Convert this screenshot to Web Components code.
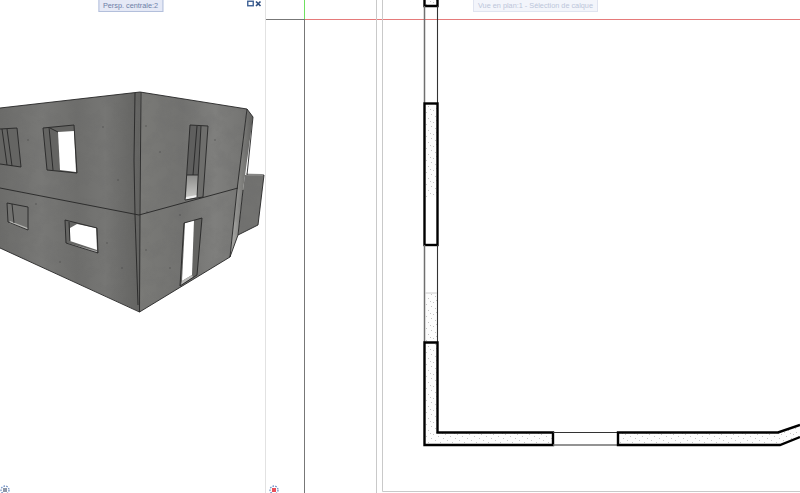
<!DOCTYPE html>
<html lang="fr">
<head>
<meta charset="utf-8">
<title>Vues</title>
<style>
    html, body{ margin: 0; height: 100%; background: #fff; overflow: hidden; }
    body{ font-family: "Liberation Sans", Arial, sans-serif; }
</style>
</head>
<body>
<cad-workspace>
    <cad-viewport slot="left" caption="Persp. centrale:2" shift="-2" pivot-left="0" controls pivot="#8f98a8"><house-view></house-view></cad-viewport>
    <cad-viewport slot="right" caption="Vue en plan:1 - Sélection de calque" shift="2.5" pivot-left="3" faded pivot="#e8505a"><plan-view></plan-view></cad-viewport>
</cad-workspace>

<script>
class CadWorkspace extends HTMLElement{

    connectedCallback(){
        this.attachShadow({mode: 'open'}).innerHTML = `
            <style>
                :host{ display: flex; width: 800px; height: 493px; }
                .left{ flex: 0 0 265px; display: flex; }
                .split{ flex: 0 0 1px; background: #e2e2e2; }
                .right{ flex: 1; display: flex; }
                ::slotted(*){ flex: 1; }
            </style>
            <div class="left"><slot name="left"></slot></div>
            <div class="split"></div>
            <div class="right"><slot name="right"></slot></div>`;
    }
}

class CadViewport extends HTMLElement{

    connectedCallback(){
        const buttons = this.hasAttribute('controls') ? `
            <svg class="buttons" width="15" height="8" viewBox="0 0 15 8">
                <rect x="0.75" y="1.25" width="5.5" height="4.5" fill="none" stroke="#3f6296" stroke-width="1.4"/>
                <path d="M9 1.5L13.5 6M13.5 1.5L9 6" stroke="#2f4f80" stroke-width="1.7"/>
            </svg>` : '';
        this.attachShadow({mode: 'open'}).innerHTML = `
            <style>
                :host{ display: block; position: relative; overflow: hidden; }
                .tab{
                    position: absolute; top: -1px; left: 50%;
                    transform: translateX(calc(-50% + ${this.getAttribute('shift') || 0}px));
                    padding: 0 4px; height: 11px; line-height: 11px;
                    font-size: 7.3px; white-space: nowrap;
                    color: #6d7fa6; background: #e5e9f6; border: 1px solid #b3bfdb;
                }
                :host([faded]) .tab{ color: #bcc5da; background: #f3f5fb; border-color: #e0e4f0; }
                .buttons{ position: absolute; top: 0; right: 3px; }
                .pivot{ position: absolute; left: ${this.getAttribute('pivot-left') || 0}px; bottom: -1px; }
            </style>
            <slot></slot>
            <div class="tab">${this.getAttribute('caption')}</div>
            ${buttons}
            <svg class="pivot" width="10" height="9" viewBox="0 0 10 9">
                <circle cx="5" cy="5" r="4" fill="none" stroke="#6f8fc4" stroke-width="1.3" stroke-dasharray="1.6 1.2"/>
                <rect x="3" y="3" width="4" height="4" fill="${this.getAttribute('pivot')}"/>
            </svg>`;
    }
}

class HouseView extends HTMLElement{

    connectedCallback(){
        const specks = [[103,127],[146,126],[118,180],[147,212],[107,243],[146,250],[160,152],[215,140],[28,140],[36,204],[180,215],[122,268],[60,262],[170,268]]
            .map(p => `<circle cx="${p[0]}" cy="${p[1]}" r="0.7" fill="#333" opacity="0.6"/>`).join('');

        this.attachShadow({mode: 'open'}).innerHTML = `
            <style>
                :host{ display: block; }
                svg{ display: block; filter: blur(0.3px); }
                .edge{ fill: none; stroke: #262626; stroke-width: 0.9; }
            </style>
            <svg width="265" height="493" viewBox="0 0 265 493">
                <defs>
                    <linearGradient id="wallLeft" x1="0" x2="1" y1="0" y2="0">
                        <stop offset="0" stop-color="#6c6c6a"/>
                        <stop offset="0.3" stop-color="#787876"/>
                        <stop offset="0.55" stop-color="#6e6e6c"/>
                        <stop offset="0.75" stop-color="#767674"/>
                        <stop offset="1" stop-color="#636361"/>
                    </linearGradient>
                    <linearGradient id="wallRight" x1="0" x2="1" y1="0" y2="0">
                        <stop offset="0" stop-color="#7a7a77"/>
                        <stop offset="0.4" stop-color="#727270"/>
                        <stop offset="0.7" stop-color="#7f7f7d"/>
                        <stop offset="1" stop-color="#747472"/>
                    </linearGradient>
                    <linearGradient id="endWall" x1="0" x2="1" y1="0" y2="0">
                        <stop offset="0" stop-color="#8f8f8c"/>
                        <stop offset="1" stop-color="#5f5f5d"/>
                    </linearGradient>
                    <linearGradient id="endWallLow" x1="0" x2="1" y1="0" y2="0">
                        <stop offset="0" stop-color="#b0b0ad"/>
                        <stop offset="1" stop-color="#7a7a78"/>
                    </linearGradient>
                    <linearGradient id="reveal" x1="0" x2="0" y1="0" y2="1">
                        <stop offset="0" stop-color="#8d8d8b"/>
                        <stop offset="1" stop-color="#c9c9c6"/>
                    </linearGradient>
                    <filter id="grain" x="0" y="0" width="100%" height="100%">
                        <feTurbulence type="fractalNoise" baseFrequency="0.07 0.07" numOctaves="4" seed="7"/>
                        <feColorMatrix values="0 0 0 0 0.15  0 0 0 0 0.15  0 0 0 0 0.15  1.4 0 0 0 -0.6"/>
                    </filter>
                    <clipPath id="shell">
                        <path d="M0 108L140 92L247 109L253 117L247 175L264 175L258 225L238 235L230 257L139.5 312L0 248Z"/>
                    </clipPath>
                </defs>

                <path d="M0 108L140 92V312L0 248Z" fill="url(#wallLeft)"/>
                <path d="M140 92L247 109L230 257L139.5 312Z" fill="url(#wallRight)"/>
                <path d="M247 109L253 117L243 190L237 190Z" fill="url(#endWall)"/>
                <path d="M237 190L243 190L238 235L230 257Z" fill="url(#endWallLow)"/>
                <path d="M245 175L264 175L258 225L238 235L243 190Z" fill="#727270"/>
                <path d="M246 173L262 174L264 176L247 176Z" fill="#d4d4d2"/>
                <rect width="265" height="493" filter="url(#grain)" clip-path="url(#shell)" opacity="0.45"/>
                ${specks}

                <!-- ouvertures etage -->
                <path d="M0 129L17 128L21 167L0 164Z" fill="#656563"/>
                <path class="edge" d="M0 129L17 128L21 167L0 164M2 129L7 165M7 129L12 166"/>
                <path d="M43 128L74 125L77 173L47 170Z" fill="#646462"/>
                <path d="M58 132L74 131L76 172L60 170Z" fill="#fff"/>
                <path class="edge" d="M43 128L74 125L77 173L47 170ZM49 127L53 170M50 128L58 132"/>
                <path d="M190 125L208 126L203 197L185 200Z" fill="#6e6e6c"/>
                <path d="M190 125L201 126L198 175L187 175Z" fill="#5f5f5e"/>
                <path d="M187 175L198 175L197 196L186 198Z" fill="url(#reveal)"/>
                <path d="M186 197L197 195L197 197L185 200Z" fill="#efefef"/>
                <path class="edge" d="M190 125L208 126L203 197L185 200ZM201 126L197 197M197 126L193 175M187 175H198"/>

                <!-- ouvertures rez -->
                <path d="M7 203L28 207L28 230L8 222Z" fill="#727270"/>
                <path d="M10 221L28 228V230L9 223Z" fill="#b5b5b2"/>
                <path class="edge" d="M7 203L28 207L28 230L8 222ZM12 204L14 223"/>
                <path d="M65 220L97 228L98 253L66 243Z" fill="#656563"/>
                <path d="M70 228L77 224L96 228L97 250L70 241Z" fill="#fff"/>
                <path d="M67 243L97 251V253L66 243Z" fill="#aaa"/>
                <path class="edge" d="M65 220L97 228L98 253L66 243ZM69 222L70 241"/>
                <path d="M184 223L202 218L197 275L180 286Z" fill="#646462"/>
                <path d="M185 223L194 220L192 275L182 281Z" fill="#fff"/>
                <path d="M182 281L192 275L193 277L181 285Z" fill="#b8b8b6"/>
                <path class="edge" d="M184 223L202 218L197 275L180 286Z"/>

                <!-- aretes -->
                <path class="edge" d="M0 108L140 92L247 109L253 117L247 175L264 175L258 225L238 235L230 257L139.5 312L0 248"/>
                <path class="edge" d="M0 188L139 215L238 188M135 93L134 160L135 215L138 305M141 92L140 215L139.5 312"/>
                <path class="edge" d="M247 109L237 190L230 257M243 190L238 235" stroke-width="0.8"/>
            </svg>`;
    }
}

class PlanView extends HTMLElement{

    connectedCallback(){
        const dots = [[1,2],[6,4],[10,1],[3,8],[8,10],[4,0],[11,6]]
            .map(p => `<rect x="${p[0]}" y="${p[1]}" width="1" height="1" fill="#c4c4c4"/>`).join('');

        this.attachShadow({mode: 'open'}).innerHTML = `
            <style>
                :host{ display: block; }
                svg{ display: block; }
                .grid{ fill: none; stroke: #c9c9c9; stroke-width: 1; }
                .thin{ fill: none; stroke: #6f6f6f; stroke-width: 1.5; }
                .hair{ fill: none; stroke: #333; stroke-width: 1.1; }
                .wall{ fill: url(#stipple); stroke: #000; stroke-width: 2.4; }
                .frame{ fill: none; stroke: #000; stroke-width: 2.4; }
            </style>
            <svg width="534" height="493" viewBox="266 0 534 493">
                <defs>
                    <pattern id="stipple" width="12" height="12" patternUnits="userSpaceOnUse">
                        <rect width="12" height="12" fill="#fdfdfd"/>
                        ${dots}
                    </pattern>
                </defs>

                <path d="M266 19.5H304" stroke="#777" fill="none"/>
                <path d="M304 19.5H800" stroke="#e57a7a" fill="none"/>
                <path d="M304.5 0V19" stroke="#6fe060" fill="none"/>
                <path d="M304.5 19V493" stroke="#777" fill="none"/>
                <path class="grid" d="M376.5 0V493M382.5 0V491.5H800"/>

                <!-- mur gauche -->
                <path class="wall" d="M424.5 -4H437.5V6H424.5Z"/>
                <path class="thin" d="M424.5 6V103"/>
                <path class="hair" d="M437.5 6V103"/>
                <rect x="424" y="104" width="14" height="93" fill="url(#stipple)"/>
                <rect class="frame" x="424.5" y="103.5" width="13" height="141.5"/>
                <rect x="425" y="293" width="12" height="49" fill="url(#stipple)"/>
                <path class="thin" d="M424.5 245V342"/>
                <path class="hair" d="M437.5 245V342"/>
                <path d="M425 293H437" stroke="#ccc" fill="none"/>

                <!-- angle et mur bas -->
                <path class="wall" d="M424.5 342.5H437.5V432.5H553V445H424.5Z"/>
                <path class="hair" d="M553 432.5H618"/>
                <path class="thin" d="M553 445H618"/>
                <path d="M618 432.5H778L800 425V437L780 445H618Z" fill="url(#stipple)"/>
                <path class="frame" d="M800 425L778 432.5H618V445H780L800 437"/>
            </svg>`;
    }
}

customElements.define('cad-workspace', CadWorkspace);
customElements.define('cad-viewport', CadViewport);
customElements.define('house-view', HouseView);
customElements.define('plan-view', PlanView);
</script>
</body>
</html>
